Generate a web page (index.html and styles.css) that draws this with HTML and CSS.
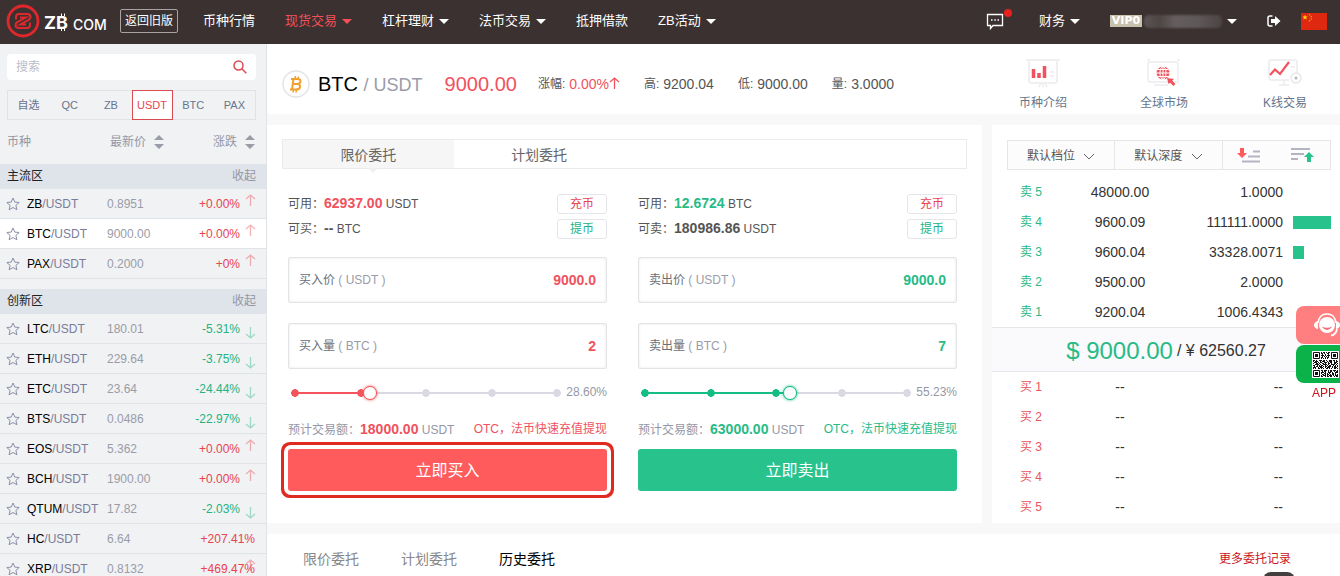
FILE: index.html
```html
<!DOCTYPE html>
<html lang="zh-CN">
<head>
<meta charset="utf-8">
<title>BTC/USDT - ZB.COM</title>
<link rel="stylesheet" href="styles.css">
</head>
<body>
<svg class="defs" aria-hidden="true">
  <symbol id="star" viewBox="0 0 14 14"><path d="M7 1l1.8 4.1 4.4.4-3.3 2.9 1 4.4L7 10.500l-3.900 2.300 1-4.400L.8 5.500l4.400-.4z" fill="none" stroke="#8b8fa8"/></symbol>
  <symbol id="up" viewBox="0 0 11 14"><path d="M5.500 1v11M1 5l4.500-4L10 5" fill="none" stroke="currentColor" stroke-width="1.300"/></symbol>
  <symbol id="down" viewBox="0 0 11 14"><path d="M5.500 2v11M1 9l4.500 4L10 9" fill="none" stroke="currentColor" stroke-width="1.300"/></symbol>
  <symbol id="sort" viewBox="0 0 10 14"><path d="M5 0l5 5H0zM5 14l5-5H0z" fill="#9a9ca8"/></symbol>
  <symbol id="chev" viewBox="0 0 12 8"><path d="M1 1l5 5 5-5" fill="none" stroke="#666"/></symbol>
</svg>

<header class="top">
  <a class="logo" href="#" aria-label="ZB.COM">
    <svg width="102" height="36" viewBox="0 0 102 36">
      <circle cx="17" cy="17" r="15" fill="none" stroke="#e0282c" stroke-width="2.800"/>
      <g fill="none" stroke="#e0282c" stroke-width="2">
        <path id="hook" d="M10 15.500V13q0-3 3-3h8q3.500 0 3.500 3 0 2-2 3L14.500 20.500H20"/>
        <use href="#hook" transform="rotate(180 17 17)"/>
      </g>
      <text class="logo-zb" x="38" y="25">ZB</text>
      <path d="M55.500 9.500v2.500M58.500 9.500v2.500M55.500 24v3M58.500 24v3" stroke="#fff"/>
      <text class="logo-com" x="67" y="26">COM</text>
    </svg>
  </a>
  <button class="old" type="button">返回旧版</button>
  <nav class="nav">
    <a href="#">币种行情</a>
    <a href="#" class="on">现货交易<i class="caret"></i></a>
    <a href="#">杠杆理财<i class="caret"></i></a>
    <a href="#">法币交易<i class="caret"></i></a>
    <a href="#">抵押借款</a>
    <a href="#">ZB活动<i class="caret"></i></a>
  </nav>
  <div class="tools">
    <a class="msg" href="#" aria-label="消息">
      <svg width="18" height="18" viewBox="0 0 18 18" fill="none" stroke="#fff" stroke-width="1.300"><path d="M1.500 2.500h15v11H7l-2.500 3v-3h-3z"/><path d="M5 8h1.500M8.300 8h1.500M11.500 8H13" stroke-width="1.500"/></svg>
      <span class="dot"></span>
    </a>
    <a href="#">财务<i class="caret"></i></a>
    <a href="#" class="user"><span class="vip">VIP0</span><span class="masked"></span><i class="caret"></i></a>
    <a href="#" aria-label="退出"><svg width="14" height="12" viewBox="0 0 14 12"><path d="M5.500 1H3Q1 1 1 3v6q0 2 2 2h2.500" fill="none" stroke="#fff" stroke-width="1.500"/><path d="M4 4h4V1l5.500 5L8 11V8H4z" fill="#fff"/></svg></a>
    <a href="#" aria-label="中文"><svg width="26" height="17" viewBox="0 0 26 17"><path d="M0 0h26v17H0z" fill="#de2910"/><path d="M4 1.800l.7 1.700h1.800L5.100 4.700l.6 1.900L4 5.500 2.300 6.600l.6-1.900-1.400-1.200h1.800z" fill="#ffde00"/><g fill="#e8a410"><circle cx="8.500" cy="1.800" r=".8"/><circle cx="10.300" cy="3.600" r=".8"/><circle cx="10.300" cy="6" r=".8"/><circle cx="8.500" cy="7.800" r=".8"/></g></svg></a>
  </div>
</header>

<div class="page">
<aside class="side">
  <div class="search">
    <input type="search" placeholder="搜索" aria-label="搜索">
    <svg width="14" height="14" viewBox="0 0 14 14" fill="none" stroke="#dc4a52" stroke-width="1.500"><circle cx="5.500" cy="5.500" r="4.500"/><path d="M8.800 8.800L13.300 13.300"/></svg>
  </div>
  <div class="markets">
    <button type="button">自选</button><button type="button">QC</button><button type="button">ZB</button><button type="button" class="on">USDT</button><button type="button">BTC</button><button type="button">PAX</button>
  </div>
  <div class="heads">
    <span>币种</span>
    <span>最新价<svg width="10" height="14"><use href="#sort"/></svg></span>
    <span>涨跌<svg width="10" height="14"><use href="#sort"/></svg></span>
  </div>
  <section class="zone">
    <div class="zone-head"><h2>主流区</h2><button type="button">收起</button></div>
    <table class="pairs">
      <tr><td><svg><use href="#star"/></svg></td><td><b>ZB</b>/USDT</td><td>0.8951</td><td class="red">+0.00%<svg><use href="#up"/></svg></td></tr>
      <tr class="on"><td><svg><use href="#star"/></svg></td><td><b>BTC</b>/USDT</td><td>9000.00</td><td class="red">+0.00%<svg><use href="#up"/></svg></td></tr>
      <tr><td><svg><use href="#star"/></svg></td><td><b>PAX</b>/USDT</td><td>0.2000</td><td class="red">+0%<svg><use href="#up"/></svg></td></tr>
    </table>
  </section>
  <section class="zone">
    <div class="zone-head"><h2>创新区</h2><button type="button">收起</button></div>
    <table class="pairs">
      <tr><td><svg><use href="#star"/></svg></td><td><b>LTC</b>/USDT</td><td>180.01</td><td class="green">-5.31%<svg><use href="#down"/></svg></td></tr>
      <tr><td><svg><use href="#star"/></svg></td><td><b>ETH</b>/USDT</td><td>229.64</td><td class="green">-3.75%<svg><use href="#down"/></svg></td></tr>
      <tr><td><svg><use href="#star"/></svg></td><td><b>ETC</b>/USDT</td><td>23.64</td><td class="green">-24.44%<svg><use href="#down"/></svg></td></tr>
      <tr><td><svg><use href="#star"/></svg></td><td><b>BTS</b>/USDT</td><td>0.0486</td><td class="green">-22.97%<svg><use href="#down"/></svg></td></tr>
      <tr><td><svg><use href="#star"/></svg></td><td><b>EOS</b>/USDT</td><td>5.362</td><td class="red">+0.00%<svg><use href="#up"/></svg></td></tr>
      <tr><td><svg><use href="#star"/></svg></td><td><b>BCH</b>/USDT</td><td>1900.00</td><td class="red">+0.00%<svg><use href="#up"/></svg></td></tr>
      <tr><td><svg><use href="#star"/></svg></td><td><b>QTUM</b>/USDT</td><td>17.82</td><td class="green">-2.03%<svg><use href="#down"/></svg></td></tr>
      <tr><td><svg><use href="#star"/></svg></td><td><b>HC</b>/USDT</td><td>6.64</td><td class="red wide">+207.41%</td></tr>
      <tr><td><svg><use href="#star"/></svg></td><td><b>XRP</b>/USDT</td><td>0.8132</td><td class="red wide">+469.47%<svg><use href="#up"/></svg></td></tr>
    </table>
  </section>
</aside>

<main class="main">
  <section class="ticker">
    <svg class="coin" width="28" height="28" viewBox="0 0 28 28" fill="none"><circle cx="14" cy="14" r="13" fill="#fff" stroke="#e4e4ea" stroke-width="1.500"/><g stroke="#f0a02c" stroke-width="2"><path d="M11.500 9l-1.500 10.500M9 9h6.500q3.500.3 3 2.800-.4 2.200-3.500 2.200H11M15 14q3.500.3 3 3-.4 2.500-4 2.500H8"/><path d="M13.500 6l-.5 3M16.500 6.500L16 9M11.500 19.500L11 22.500M14.500 19.500L14 22.500" stroke-width="1.500"/></g></svg>
    <h1>BTC <span>/ USDT</span></h1>
    <strong>9000.00</strong>
    <ul>
      <li>涨幅: <em>0.00%</em><svg class="rise" width="11" height="14"><use href="#up"/></svg></li>
      <li>高: <em>9200.04</em></li>
      <li>低: <em>9000.00</em></li>
      <li>量: <em>3.0000</em></li>
    </ul>
    <nav class="links">
      <a href="#"><svg width="36" height="30" viewBox="0 0 36 30"><path d="M1 1h34M4 2v20q0 2 2 2h24q2 0 2-2V2M18 24v4M14 28l2-4M22 28l-2-4M25 13h4M25 17h4" fill="none" stroke="#ececee" stroke-width="1.500"/><path d="M8.500 10v9M14 14v5M19.500 7v12" stroke="#f0525e" stroke-width="3.500"/></svg>币种介绍</a>
      <a href="#"><svg width="36" height="30" viewBox="0 0 36 30"><path d="M4 3h26q2 0 2 2v18H4q-2 0-2-2V5q0-2 2-2zM8 26h14M1 1h3M31 1h3" fill="none" stroke="#ececee" stroke-width="1.300"/><circle cx="17" cy="14" r="6.500" fill="#f0525e"/><path d="M10 14h14M11.500 10.500h11M11.500 17.500h11M17 7v14" stroke="#fff"/><ellipse cx="17" cy="14" rx="3" ry="6.500" fill="none" stroke="#fff"/><path d="M21 19l7 1-1.800 1.800 3.300 3.200-2 2-3.400-3.200L22.500 25z" fill="#f0525e"/></svg>全球市场</a>
      <a href="#"><svg width="36" height="30" viewBox="0 0 36 30"><path d="M4 1h24q2 0 2 2v15M22 21H4q-2 0-2-2V3q0-2 2-2M12 26h10M17 21v5M24 8h4" fill="none" stroke="#ececee" stroke-width="1.500"/><circle cx="29" cy="19" r="5" fill="#fff" stroke="#e4e4e8" stroke-width="1.300"/><circle cx="29" cy="19" r="1.500" fill="#b5b5bd"/><path d="M3 16l5-5.500 5 4.500L22 3" fill="none" stroke="#f0525e" stroke-width="2.200"/></svg>K线交易</a>
    </nav>
  </section>

  <div class="work">
  <section class="trade">
    <div class="tabs"><button type="button" class="on">限价委托</button><button type="button">计划委托</button></div>
    <div class="forms">
      <form class="buy">
        <p><span>可用<i class="mid">：</i><b class="hue">62937.00</b> USDT</span><button type="button" class="mini red">充币</button></p>
        <p><span>可买<i class="mid">：</i><b>--</b> BTC</span><button type="button" class="mini green">提币</button></p>
        <label class="field"><span>买入价 <em>( USDT )</em></span><input type="text" value="9000.0"></label>
        <label class="field"><span>买入量 <em>( BTC )</em></span><input type="text" value="2"></label>
        <div class="slide"><div class="rail" style="--value:28.6%"><input type="range" min="0" max="100" step="0.01" value="28.6" aria-label="买入比例"></div><output>28.60%</output></div>
        <div class="sum"><span>预计交易额<i class="mid">：</i><b class="hue">18000.00</b> USDT</span><a href="#">OTC<i class="mid">，</i>法币快速充值提现</a></div>
        <button type="button" class="submit marked">立即买入</button>
      </form>
      <form class="sell">
        <p><span>可用<i class="mid">：</i><b class="hue">12.6724</b> BTC</span><button type="button" class="mini red">充币</button></p>
        <p><span>可卖<i class="mid">：</i><b>180986.86</b> USDT</span><button type="button" class="mini green">提币</button></p>
        <label class="field"><span>卖出价 <em>( USDT )</em></span><input type="text" value="9000.0"></label>
        <label class="field"><span>卖出量 <em>( BTC )</em></span><input type="text" value="7"></label>
        <div class="slide"><div class="rail" style="--value:55.23%"><input type="range" min="0" max="100" step="0.01" value="55.23" aria-label="卖出比例"></div><output>55.23%</output></div>
        <div class="sum"><span>预计交易额<i class="mid">：</i><b class="hue">63000.00</b> USDT</span><a href="#">OTC<i class="mid">，</i>法币快速充值提现</a></div>
        <button type="button" class="submit">立即卖出</button>
      </form>
    </div>
  </section>

  <section class="book">
    <div class="filters">
      <div class="pick"><select aria-label="档位"><option>默认档位</option></select><svg width="12" height="8"><use href="#chev"/></svg></div>
      <div class="pick"><select aria-label="深度"><option>默认深度</option></select><svg width="12" height="8"><use href="#chev"/></svg></div>
      <div class="views">
        <button type="button" aria-label="卖盘"><svg width="24" height="16" viewBox="0 0 24 16"><path d="M3 1h4v5h3L5 11 0 6h3z" fill="#ff5a5c"/><path d="M16 4.500h7M11 9.500h12M5 14.500h18" stroke="#b3b4c2" stroke-width="2"/></svg></button>
        <button type="button" aria-label="买盘"><svg width="24" height="16" viewBox="0 0 24 16"><path d="M0 2h19M0 7h13M0 12h7" stroke="#b3b4c2" stroke-width="2"/><path d="M18 5l5 5h-3v5h-4v-5h-3z" fill="#28c38d"/></svg></button>
      </div>
    </div>
    <table class="asks">
      <tr><th>卖 5</th><td>48000.00</td><td>1.0000</td><td></td></tr>
      <tr><th>卖 4</th><td>9600.09</td><td>111111.0000</td><td><span class="bar" style="width:100%"></span></td></tr>
      <tr><th>卖 3</th><td>9600.04</td><td>33328.0071</td><td><span class="bar" style="width:30%"></span></td></tr>
      <tr><th>卖 2</th><td>9500.00</td><td>2.0000</td><td></td></tr>
      <tr><th>卖 1</th><td>9200.04</td><td>1006.4343</td><td></td></tr>
    </table>
    <div class="last"><b>$ 9000.00</b> <span>/ ¥ 62560.27</span></div>
    <table class="bids">
      <tr><th>买 1</th><td>--</td><td>--</td><td></td></tr>
      <tr><th>买 2</th><td>--</td><td>--</td><td></td></tr>
      <tr><th>买 3</th><td>--</td><td>--</td><td></td></tr>
      <tr><th>买 4</th><td>--</td><td>--</td><td></td></tr>
      <tr><th>买 5</th><td>--</td><td>--</td><td></td></tr>
    </table>
  </section>
  </div>

  <section class="orders">
    <button type="button">限价委托</button><button type="button">计划委托</button><button type="button" class="on">历史委托</button>
    <a href="#">更多委托记录</a>
  </section>
</main>
</div>

<div class="float">
  <button type="button" class="help" aria-label="客服"><svg width="30" height="28" viewBox="0 0 30 28"><path d="M5 12Q6 3 14 3t9 9" fill="none" stroke="#fff" stroke-width="1.500"/><path d="M5 10q-4 1-4 4t4 4zM23 10q4 1 4 4t-4 4z" fill="#fff"/><circle cx="14" cy="14" r="8" fill="#fff"/><path d="M8.500 15.500q5.500 2.500 11 0-5.500 7-11 0z" fill="#ee6f76"/><path d="M24 18q-1 6-6 6.500" fill="none" stroke="#fff" stroke-width="1.800"/></svg></button>
  <button type="button" class="app" aria-label="APP"><svg width="27" height="27" viewBox="0 0 27 27"><path d="M0 0h27v27H0z" fill="#fff"/><g stroke="#111" fill="none">
    <path d="M9 1.500h9" stroke-dasharray="1 1 2 1"/><path d="M9 2.500h9" stroke-dasharray="2 1 1 2"/><path d="M10 3.500h8" stroke-dasharray="1 2"/><path d="M9 4.500h9" stroke-dasharray="3 1 1 1"/><path d="M10 5.500h8" stroke-dasharray="1 1"/><path d="M9 6.500h9" stroke-dasharray="2 2 1 1"/><path d="M9 7.500h8" stroke-dasharray="1 1"/>
    <path d="M1 9.500h25" stroke-dasharray="2 1 1 2 3 1"/><path d="M1 10.500h25" stroke-dasharray="1 1 3 2"/><path d="M2 11.500h24" stroke-dasharray="3 1 1 1 2 2"/><path d="M1 12.500h25" stroke-dasharray="1 2 2 1"/><path d="M3 13.500h23" stroke-dasharray="4 1 1 2"/><path d="M1 14.500h25" stroke-dasharray="2 2 1 1 1 1"/><path d="M2 15.500h24" stroke-dasharray="1 1 2 1 3 1"/><path d="M1 16.500h25" stroke-dasharray="3 2 1 1"/><path d="M1 17.500h25" stroke-dasharray="1 1 1 2 2 1"/>
    <path d="M9 19.500h17" stroke-dasharray="2 1 3 1 1 1"/><path d="M10 20.500h16" stroke-dasharray="1 1 2 2"/><path d="M9 21.500h17" stroke-dasharray="3 1 1 2"/><path d="M9 22.500h16" stroke-dasharray="1 2 2 1 1 1"/><path d="M10 23.500h16" stroke-dasharray="2 1 1 1"/><path d="M9 24.500h17" stroke-dasharray="1 1 3 1"/><path d="M9 25.500h17" stroke-dasharray="2 2 1 1 2 1"/>
    <path d="M1.500 1.500h6v6h-6zM19.500 1.500h6v6h-6zM1.500 19.500h6v6h-6z"/></g><path d="M3 3h3v3H3zM21 3h3v3h-3zM3 21h3v3H3z" fill="#111"/></svg></button>
  <span>APP</span>
</div>
<button type="button" class="totop" aria-label="返回顶部"></button>
</body>
</html>
```
FILE: styles.css
```css
* { box-sizing: border-box; }
body {
  margin: 0;
  height: 100vh;
  overflow: hidden;
  display: flex;
  flex-direction: column;
  background: #f8f8f8;
  color: #555;
  font: 12px/20px "Liberation Sans", "Noto Sans CJK SC", sans-serif;
}
button, input, select { font: inherit; color: inherit; margin: 0; padding: 0; border: 0; background: none; }
a { color: inherit; text-decoration: none; }
h1, h2, p, ul { margin: 0; padding: 0; font-weight: normal; }
ul { list-style: none; }
i, em { font-style: normal; }
svg { flex: none; }
table { width: 100%; border-collapse: separate; border-spacing: 0; table-layout: fixed; }
.defs { position: absolute; width: 0; height: 0; }
.red { color: #e8434f; }
.green { color: #26b37f; }
.mid { font-family: "Noto Sans CJK TC", sans-serif; line-height: 1; }

/* top bar */
.top { flex: none; height: 44px; display: flex; align-items: center; padding: 0 13px 2px 6px; background: #3b3131; color: #fff; font-size: 13px; }
.logo { display: flex; margin-right: 12px; padding-top: 2px; }
.logo-zb { font: bold 18px Inter, sans-serif; fill: #fff; }
.logo-com { font: 500 14px Inter, sans-serif; fill: #fff; }
.old { height: 24px; width: 58px; border: 1px solid #aaa3a3; border-radius: 2px; font-size: 12px; }
.nav { display: flex; gap: 30px; margin-left: 25px; }
.nav a, .tools a { display: flex; align-items: center; white-space: nowrap; }
.nav .on { color: #f5505a; }
.caret { margin-left: 5px; border: 5px solid transparent; border-top-color: currentColor; border-bottom: 0; }
.tools { display: flex; align-items: center; margin-left: auto; }
.tools a + a { margin-left: 30px; }
.tools a.msg + a { margin-left: 35px; }
.tools a:last-child { margin-left: 20px; }
.tools .msg { position: relative; }
.dot { position: absolute; top: -3px; right: -8px; width: 8px; height: 8px; border-radius: 50%; background: #e8211f; }
.vip { width: 32px; height: 12px; background: #c8c1ae; font: bold 11px/12px "DejaVu Sans", sans-serif; text-align: center; }
.masked { width: 78px; height: 13px; margin-left: 2px; border-radius: 5px; background: linear-gradient(90deg, #5c5454, #4e4545 20%, #655e5e 40%, #5f5858 70%, #4c4444); filter: blur(1px); }

/* market list */
.page { flex: 1; display: flex; min-height: 0; }
.side { flex: none; width: 267px; overflow: hidden; padding-top: 10px; background: #f0f2f4; border-right: 1px solid #dfe2e6; }
.search { display: flex; align-items: center; height: 26px; margin: 0 10px 10px 7px; padding: 0 9px; border-radius: 4px; background: #fff; }
.search input { flex: 1; min-width: 0; outline: 0; }
.search input::placeholder { color: #bdbdc7; }
.markets { display: grid; grid-template-columns: repeat(6, 1fr); height: 30px; margin: 0 10px 0 7px; border: 1px solid #dfe2e6; font-size: 11px; color: #68748c; }
.markets .on { margin: -1px 0; border: 1px solid #dc4a52; background: #fff; color: #e8434f; }
.heads { display: flex; align-items: center; height: 44px; padding: 0 11px 0 7px; color: #9597a5; }
.heads span { display: flex; align-items: center; gap: 8px; }
.heads span:nth-child(2) { margin: 0 auto 0 79px; }
.zone { margin-bottom: 10px; }
.zone-head { display: flex; justify-content: space-between; height: 25px; line-height: 25px; padding: 0 10px 0 7px; background: #dfe3ea; }
.zone-head h2 { font-size: 12px; color: #222; }
.zone-head button { color: #9597a5; }
.pairs td { height: 30px; padding: 0; border-bottom: 1px solid #dfe2e6; color: #9a9ca8; white-space: nowrap; }
.pairs td:nth-child(1) { width: 27px; padding-left: 6px; }
.pairs td:nth-child(2) { width: 80px; color: #7b7c99; }
.pairs td:nth-child(3) { width: 70px; }
.pairs td:nth-child(4) { position: relative; text-align: right; padding-right: 26px; }
.pairs td.wide { padding-right: 11px; }
.pairs td.red { color: #e8434f; }
.pairs td.green { color: #26b37f; }
.pairs b { font-weight: normal; color: #000; }
.pairs td:first-child svg { display: block; width: 14px; height: 14px; }
.pairs td:last-child svg { position: absolute; right: 10px; top: 5px; width: 11px; height: 14px; opacity: .4; }
.pairs td.green svg { top: 11px; }
.pairs .on { background: #fff; }

/* pair summary */
.main { flex: 1; min-width: 0; display: flex; flex-direction: column; gap: 11px; }
.ticker { display: flex; align-items: center; height: 70px; padding: 10px 30px 0 15px; background: #fff; }
.ticker h1 { margin: 0 22px 0 8px; font-size: 20px; color: #000; white-space: nowrap; }
.ticker h1 span { font-size: 18px; color: #9a9ca8; }
.ticker strong { margin-right: 21px; font-size: 20px; font-weight: normal; color: #f0525e; }
.ticker ul { display: flex; gap: 24px; }
.ticker li { display: flex; align-items: center; gap: 4px; white-space: nowrap; }
.ticker em { font-size: 14px; }
.ticker li:first-child em, .rise { color: #f0525e; }
.rise { margin-left: -4px; }
.links { display: flex; gap: 71px; margin: 4px 0 0 auto; }
.links a { display: flex; flex-direction: column; align-items: center; gap: 4px; width: 50px; color: #64758c; white-space: nowrap; }

/* order entry */
.work { display: flex; gap: 10px; }
.trade { flex: 1; min-width: 0; padding: 14px 15px 32px; background: #fff; }
.tabs { display: flex; height: 30px; border: 1px solid #ebebeb; font-size: 14px; color: #666; }
.tabs button { position: relative; width: 25%; padding-top: 2px; }
.tabs .on { background: #f6f6f6; }
.tabs .on::after { content: ""; position: absolute; left: 50%; top: 100%; border: 5px solid transparent; border-top-color: #f0f0f0; border-bottom: 0; }
.forms { display: grid; grid-template-columns: 1fr 1fr; gap: 31px; padding: 22px 10px 0 6px; }
.forms p { display: flex; justify-content: space-between; align-items: center; height: 25px; }
.forms b { font-size: 14px; }
.buy { --hue: #f0525e; --fill: #ff5a5c; --line: #f4555c; }
.sell { --hue: #28bb87; --fill: #28c38d; --line: #14bd82; }
.hue { color: var(--hue); }
.mini { width: 50px; height: 20px; border: 1px solid #e4e6ea; border-radius: 3px; line-height: 18px; }
.field { display: flex; align-items: center; height: 46px; margin-top: 20px; padding: 0 10px; border: 1px solid #e2e4e6; border-radius: 2px; box-shadow: inset 0 0 3px #e8e8ea; }
.forms p + .field { margin-top: 16px; }
.field span { white-space: nowrap; color: #68707a; }
.field em { color: #9a9ca8; }
.field input { flex: 1; min-width: 0; font-size: 14px; font-weight: bold; text-align: right; color: var(--hue); outline: 0; }
.slide { display: flex; align-items: center; height: 48px; color: #9597a5; }
.slide output { width: 43px; padding-bottom: 3px; text-align: right; }
.rail {
  --on: radial-gradient(circle closest-side, var(--line) 90%, transparent);
  --off: radial-gradient(circle closest-side, #d9d8e3 90%, transparent);
  flex: 1;
  min-width: 0;
  padding: 0 3px;
  background: var(--on), var(--on), var(--off), var(--off), var(--off), linear-gradient(var(--line), var(--line)), linear-gradient(#d9d8e3, #d9d8e3);
  background-position: 0 50%, 25% 50%, 50% 50%, 75% 50%, 100% 50%, 0 50%, 0 50%;
  background-size: 8px 8px, 8px 8px, 8px 8px, 8px 8px, 8px 8px, var(--value) 2px, 100% 2px;
  background-origin: content-box;
  background-repeat: no-repeat;
}
.sell .rail { background-image: var(--on), var(--on), var(--on), var(--off), var(--off), linear-gradient(var(--line), var(--line)), linear-gradient(#d9d8e3, #d9d8e3); }
.rail input { display: block; width: calc(100% + 6px); height: 16px; margin: 0 -3px; appearance: none; }
.rail input::-webkit-slider-thumb { appearance: none; width: 14px; height: 14px; border: 1px solid var(--line); border-radius: 50%; background: #fff; box-shadow: 0 0 3px var(--line); }
.sum { display: flex; justify-content: space-between; align-items: center; height: 24px; margin-bottom: 8px; color: #9597a5; white-space: nowrap; }
.sum a { color: var(--hue); }
.submit { display: block; width: 100%; height: 42px; padding-top: 2px; border-radius: 3px; background: var(--fill); color: #fff; font-size: 16px; }
.marked { box-shadow: 0 0 0 4px #fff, 0 0 0 7px #e02a20; }

/* order book */
.book { flex: none; width: 348px; padding-top: 15px; background: #fff; }
.filters { display: grid; grid-template-columns: repeat(3, 1fr); height: 30px; margin: 0 9px 7px 15px; border: 1px solid #e6e6ea; background: #fcfcfd; }
.pick { position: relative; border-right: 1px solid #e6e6ea; }
.pick select { width: 100%; height: 28px; padding: 2px 0 0 19px; appearance: none; }
.pick svg { position: absolute; right: 19px; top: 12px; pointer-events: none; }
.views { display: flex; align-items: center; justify-content: space-around; }
.views button { display: flex; }
.book th, .book td { height: 30px; padding: 0; font-size: 14px; text-align: right; color: #333; }
.book th { width: 74px; padding-left: 28px; font-size: 12px; font-weight: normal; text-align: left; color: #28b985; }
.book .bids th { color: #e8545c; }
.book td:nth-child(2) { width: 108px; text-align: center; }
.book td:nth-child(3) { width: 109px; }
.book td:nth-child(4) { padding: 0 9px 0 10px; }
.bar { display: block; height: 13px; background: #28c38d; }
.last { height: 45px; display: flex; align-items: center; justify-content: center; gap: 4px; padding-top: 2px; border: 1px solid #e6e6ea; border-width: 1px 0; background: #fafafc; font-size: 16px; color: #333; }
.last b { font-size: 24px; font-weight: normal; color: #28bb87; }

/* order history */
.orders { flex: 1; display: flex; align-items: flex-start; gap: 42px; padding: 15px 49px 0 36px; background: #fff; font-size: 14px; color: #888; }
.orders .on { color: #000; }
.orders a { margin-left: auto; font-size: 12px; color: #c8151d; }

.float { position: fixed; right: 0; top: 306px; width: 44px; display: flex; flex-direction: column; gap: 1px; overflow: hidden; color: #d0101c; }
.float button { display: flex; align-items: center; height: 38px; border-radius: 8px 0 0 8px; }
.float .help { padding-left: 17px; background: #ff7f81; }
.float .app { padding-left: 16px; background: #0bb24a; }
.float span { padding-left: 16px; line-height: 18px; }
.totop { position: fixed; right: 45px; bottom: -28px; width: 32px; height: 32px; border-radius: 8px; background: #443f3f; }
```
